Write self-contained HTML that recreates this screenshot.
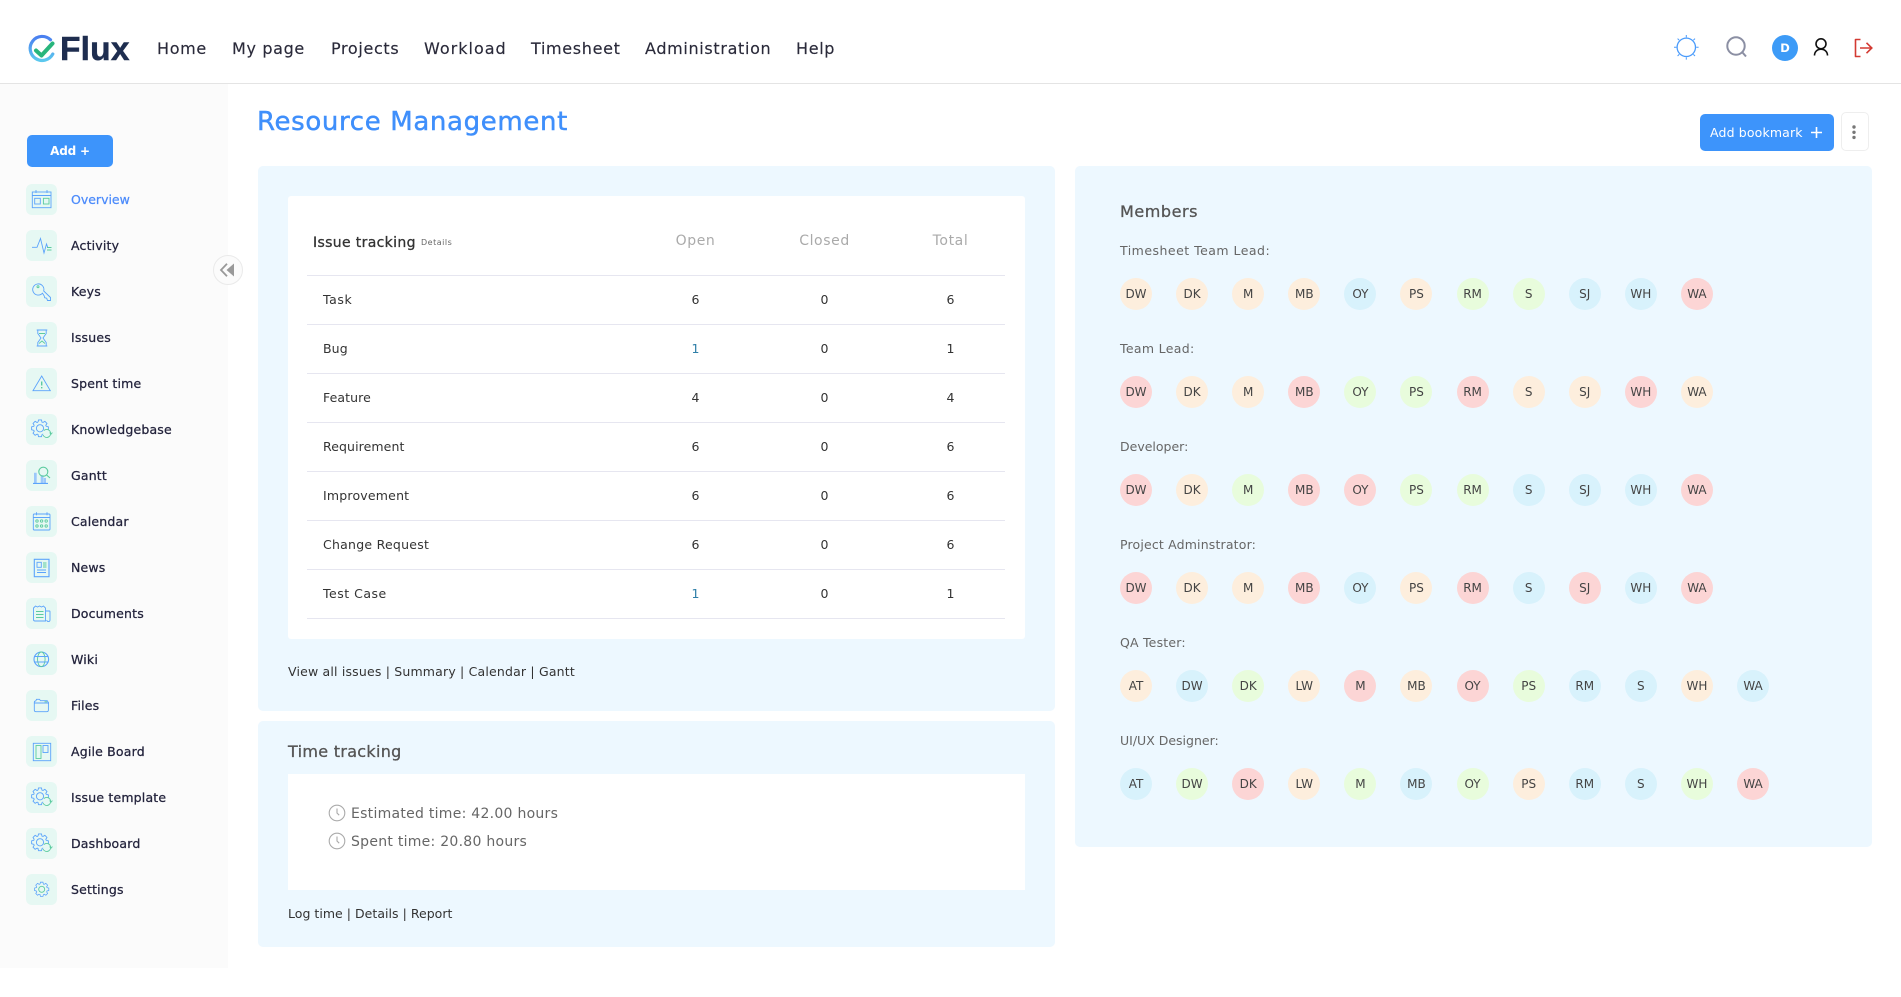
<!DOCTYPE html>
<html lang="en">
<head>
<meta charset="utf-8">
<title>Resource Management - Flux</title>
<style>
*{box-sizing:border-box}
html,body{margin:0;padding:0;background:#fff;width:1901px;height:997px;overflow:hidden}
body{position:relative;font-family:"DejaVu Sans","Liberation Sans",sans-serif;color:#333}
.t{position:absolute;white-space:nowrap;height:20px;line-height:20px}
.m{-webkit-text-stroke:.3px currentColor}
header{position:absolute;left:0;top:0;width:1901px;height:84px;border-bottom:1px solid #e4e4e4;background:#fff}
.nav{font-size:16px;letter-spacing:.66px;color:#2a2a3a;top:39px;-webkit-text-stroke:.15px currentColor}
aside{position:absolute;left:0;top:84px;width:228px;height:884px;background:#fbfbfb}
.side{position:absolute;left:26px;top:184px;margin:0;padding:0;list-style:none}
.side li{display:flex;align-items:center;height:31px;margin-bottom:15px;font-size:12.5px;letter-spacing:.18px;color:#23233c;-webkit-text-stroke:.25px currentColor}
.side svg{width:31px;height:31px;background:#e6f8f3;border-radius:6px;margin-right:14px;flex:none}
.side .a{color:#4c8bfb;letter-spacing:0}
svg .b{fill:none;stroke:#5ba3fb;stroke-width:.9}
svg .g{fill:none;stroke:#5ccb9f;stroke-width:.9}
.panel{position:absolute;background:#edf8ff;border-radius:5px}
.box{position:absolute;background:#fff}
.row{position:absolute;left:307px;width:698px;height:49px;border-bottom:1px solid #e6e6f0;font-size:12.5px;letter-spacing:.1px;line-height:48px;color:#333}
.row b{position:absolute;font-weight:400;width:60px;text-align:center}
.row .c1{left:358.5px}.row .c2{left:487.5px}.row .c3{left:613.5px}
.row span{position:absolute;left:16px}
.th{font-size:14px;letter-spacing:.6px;color:#aaa;width:90px;text-align:center;top:231px}
.links{font-size:12.5px;letter-spacing:.18px;color:#333}
.role{font-size:12.5px;letter-spacing:.48px;color:#666;left:1120px}
.av{position:absolute;left:1120px;display:flex}
.av i{font-style:normal;display:block;width:32px;height:32px;border-radius:50%;margin-right:24.1px;text-align:center;line-height:32px;font-size:12px;color:#444}
.o{background:#fdeedd}.u{background:#d8f2fc}.n{background:#e8fcdc}.r{background:#fcd5d5}
</style>
</head>
<body>

<svg width="0" height="0" style="position:absolute">
  <defs>
    <g id="cog">
      <path id="tooth" d="M6.18-2L8.37-1.48V1.48L6.18 2L5.79 2.95"/>
      <use href="#tooth" transform="rotate(45)"/>
      <use href="#tooth" transform="rotate(90)"/>
      <use href="#tooth" transform="rotate(135)"/>
      <use href="#tooth" transform="rotate(180)"/>
      <use href="#tooth" transform="rotate(225)"/>
      <use href="#tooth" transform="rotate(270)"/>
      <use href="#tooth" transform="rotate(315)"/>
    </g>
    <g id="cogrefresh">
      <use href="#cog" transform="translate(14 14.3)" class="b"/>
      <circle class="b" cx="14" cy="14.3" r="3.6"/>
      <path d="M17 21a4 4 0 1 0 1-4.5" fill="#e6f8f3" stroke="#5ccb9f" stroke-width=".9"/>
      <path class="g" d="M23.6 18.6l1.4 1.6 1.4-1.6"/>
    </g>
    <linearGradient id="lg" x1="0" y1="0" x2="0" y2="1">
      <stop offset="0" stop-color="#4a7ff0"/><stop offset="1" stop-color="#5cc8ee"/>
    </linearGradient>
  </defs>
</svg>

<header>
  <svg style="position:absolute;left:26px;top:33px" width="34" height="32" viewBox="26 33 34 32">
    <path d="M50.5 39.8A12 12 0 1 0 52.8 54" fill="none" stroke="url(#lg)" stroke-width="3.2" stroke-linecap="round"/>
    <path d="M36 50.5L41.5 55.5L52.5 43.5" fill="none" stroke="#28b57c" stroke-width="4" stroke-linecap="round" stroke-linejoin="round"/>
  </svg>
  <div class="t" style="left:60px;top:40px;font:bold 33.5px/20px 'Liberation Sans',sans-serif;color:#1e2d4f;letter-spacing:.2px;-webkit-text-stroke:.5px #1e2d4f">Flux</div>
  <a class="t nav" style="left:157px">Home</a>
  <a class="t nav" style="left:232px">My page</a>
  <a class="t nav" style="left:331px">Projects</a>
  <a class="t nav" style="left:424px;letter-spacing:1px">Workload</a>
  <a class="t nav" style="left:531px">Timesheet</a>
  <a class="t nav" style="left:645px">Administration</a>
  <a class="t nav" style="left:796px">Help</a>

  <svg style="position:absolute;left:1670px;top:25px" width="210" height="45" viewBox="1670 25 210 45">
    <circle cx="1686.3" cy="47.3" r="9.2" fill="none" stroke="#4a9bfb" stroke-width="1.3"/>
    <path d="M1686.3 35v2.4M1686.3 57.2v2.4M1674 47.3h2.4M1696.2 47.3h2.4M1677.6 38.6l1.6 1.6M1693.4 54.4l1.6 1.6M1677.6 56l1.6-1.6M1693.4 40.2l1.6-1.6" stroke="#4a9bfb" stroke-width="1" fill="none"/>
    <circle cx="1736" cy="46" r="8.7" fill="none" stroke="#8b8fa3" stroke-width="2"/>
    <path d="M1742.5 52.5L1746 56.5" stroke="#8b8fa3" stroke-width="2" fill="none"/>
    <circle cx="1785" cy="48" r="13" fill="#3d9bf7"/>
    <circle cx="1821" cy="43.8" r="5" fill="none" stroke="#111" stroke-width="1.6"/>
    <path d="M1814.5 55.5c0-3.8 2.8-6.3 6.5-6.3s6.5 2.5 6.5 6.3" fill="none" stroke="#111" stroke-width="1.6"/>
    <path d="M1860.5 39.5H1855.5V56.5H1860.5" fill="none" stroke="#d33a32" stroke-width="1.6" stroke-linejoin="round"/>
    <path d="M1860 48H1871.5M1866.5 42.8L1871.8 48L1866.5 53.2" fill="none" stroke="#d33a32" stroke-width="1.6"/>
  </svg>
  <div class="t" style="left:1775px;top:38px;width:20px;text-align:center;color:#fff;font-weight:bold;font-size:11.5px">D</div>
</header>

<aside></aside>

<div style="position:absolute;left:27px;top:135px;width:86px;height:32px;background:#3d94fb;border-radius:5px;color:#fff;font-weight:bold;font-size:12px;letter-spacing:-.2px;line-height:32px;text-align:center">Add +</div>

<ul class="side">
  <li class="a"><svg viewBox="0 0 31 31"><rect class="b" x="6.3" y="8" width="18.7" height="15.7"/><path class="b" d="M6.3 11.5H25M10 6v3M21 6v3"/><rect class="b" x="8.7" y="14.3" width="5.6" height="5.7"/><rect class="g" x="17.4" y="14.3" width="5.6" height="5.7"/></svg>Overview</li>
  <li><svg viewBox="0 0 31 31"><path class="b" d="M6 17.3h5l3.5-8.8L18 23l2.5-9 1.2 3.3"/><path class="g" d="M21 17.5h4.5M21 20h4.5"/></svg>Activity</li>
  <li><svg viewBox="0 0 31 31"><path class="b" d="M16.5 17.2a5.6 5.6 0 1 1 1.2-2.2l6.8 6.5v3h-3l-.8-2.3-2-.5-.5-1.8z"/><circle class="g" cx="12" cy="10.7" r="1"/></svg>Keys</li>
  <li><svg viewBox="0 0 31 31"><path class="b" d="M10.7 8h10.6M10.7 24h10.6M11.8 8v3.5L15 16l-3.2 4.5V24M20.2 8v3.5L17 16l3.2 4.5V24"/><path class="g" d="M13 11.5h6M13 21.5l3-2.5 3 2.5"/></svg>Issues</li>
  <li><svg viewBox="0 0 31 31"><path class="b" d="M15.7 8L24.3 22.7H7z"/><path class="g" style="stroke-width:1.4" d="M15.7 13.5v4M15.7 19v1.4"/></svg>Spent time</li>
  <li><svg viewBox="0 0 31 31"><use href="#cogrefresh"/></svg>Knowledgebase</li>
  <li><svg viewBox="0 0 31 31"><path d="M8 12.7h2.7V23H8zM14.7 15.3h2.8V23h-2.8zM17.8 18h2.2v5h-2.2z" fill="#9cc8fb"/><path class="b" style="stroke-width:1.1" d="M7 23.4H22"/><circle class="g" style="stroke-width:1.1" cx="17.3" cy="11.7" r="4.5"/><path class="g" style="stroke-width:1.1" d="M20.6 15l3.4 3"/></svg>Gantt</li>
  <li><svg viewBox="0 0 31 31"><rect class="b" x="7.3" y="8" width="16.7" height="16" rx="1"/><path class="b" d="M7.3 11.5H24M10.5 6.3v3M21 6.3v3"/><g class="g"><circle cx="11" cy="15" r="1.2"/><circle cx="15.6" cy="15" r="1.2"/><circle cx="20.2" cy="15" r="1.2"/><circle cx="11" cy="20" r="1.2"/><circle cx="15.6" cy="20" r="1.2"/><circle cx="20.2" cy="20" r="1.2"/></g></svg>Calendar</li>
  <li><svg viewBox="0 0 31 31"><rect class="b" style="stroke-width:1.1" x="8.3" y="7.3" width="14.7" height="17.4"/><rect class="b" x="11" y="10.3" width="4.3" height="5"/><path class="g" d="M17 11h3.5M17 13h3.5M17 15h3.5"/><path class="b" d="M11 18h9M11 20.5h9"/></svg>News</li>
  <li><svg viewBox="0 0 31 31"><path class="b" d="M7.5 10l2-2 2 1 2-1 2 1 2-1 2 2v13H9a1.5 1.5 0 0 1-1.5-1.5zM20 13h3.5a.5.5 0 0 1 .5.5V22a1.6 1.6 0 0 1-3.2 0"/><path class="g" d="M10 13.5h7.5M10 16.5h7.5M10 19.5h7.5"/></svg>Documents</li>
  <li><svg viewBox="0 0 31 31"><circle class="b" style="stroke-width:1.1" cx="15.3" cy="15.3" r="7.3"/><ellipse class="g" cx="15.3" cy="15.3" rx="3.8" ry="7.3"/><path class="b" d="M8.5 12.5h13.6M8.5 18h13.6"/></svg>Wiki</li>
  <li><svg viewBox="0 0 31 31"><path class="b" d="M8.3 12.5c0-1 .6-1.6 1.5-1.6l.7-1.6h3l1 1.4h6.7l1.2 1.8v7.5c0 1-.7 1.7-1.7 1.7H10c-1 0-1.7-.7-1.7-1.7z"/><path class="b" d="M8.3 13h14.7"/><path class="g" d="M18.5 11.8h2.5"/></svg>Files</li>
  <li><svg viewBox="0 0 31 31"><rect class="b" x="7.3" y="7.3" width="17.4" height="17.4"/><rect class="g" x="10" y="9.5" width="5" height="13"/><rect class="b" x="17" y="9.5" width="5" height="7"/></svg>Agile Board</li>
  <li><svg viewBox="0 0 31 31"><use href="#cogrefresh"/></svg>Issue template</li>
  <li><svg viewBox="0 0 31 31"><use href="#cogrefresh"/></svg>Dashboard</li>
  <li><svg viewBox="0 0 31 31"><use href="#cog" class="b" transform="translate(15.7 15.3) scale(.85)"/><circle class="g" cx="15.7" cy="15.3" r="3"/></svg>Settings</li>
</ul>

<div style="position:absolute;left:213px;top:255px;width:30px;height:30px;border-radius:50%;background:#fbfbfb;border:1px solid #eaeaea"></div>
<svg style="position:absolute;left:213px;top:255px" width="30" height="30" viewBox="213 255 30 30"><path d="M227 263.8L221 270L227 276.2" fill="none" stroke="#999" stroke-width="1.8"/><path d="M234 263.5L226.5 270L234 276.5Z" fill="#999"/></svg>

<h1 class="t" style="margin:0;left:257px;top:112px;font-size:26px;font-weight:400;letter-spacing:.64px;color:#3f8ffb;-webkit-text-stroke:.45px #3f8ffb">Resource Management</h1>

<div style="position:absolute;left:1700px;top:114px;width:134px;height:37px;background:#3d94fb;border-radius:5px"></div>
<div class="t" style="left:1710px;top:123px;font-size:12.5px;letter-spacing:.15px;color:#fff">Add bookmark</div>
<svg style="position:absolute;left:1810px;top:126px" width="13" height="13" viewBox="0 0 13 13"><path d="M6.5 1v11M1 6.5h11" stroke="#fff" stroke-width="1.6" fill="none"/></svg>
<div style="position:absolute;left:1841px;top:112px;width:28px;height:39px;background:#fff;border:1px solid #eee;border-radius:5px"></div>
<svg style="position:absolute;left:1850px;top:122px" width="8" height="20" viewBox="0 0 8 20"><circle cx="4" cy="5" r="1.7" fill="#777"/><circle cx="4" cy="10.3" r="1.7" fill="#777"/><circle cx="4" cy="15.4" r="1.7" fill="#777"/></svg>

<!-- Issue tracking panel -->
<section class="panel" style="left:258px;top:166px;width:797px;height:545px"></section>
<div class="box" style="left:288px;top:196px;width:737px;height:443px;border-radius:3px"></div>
<div class="t m" style="left:313px;top:233px;font-size:14px;letter-spacing:.35px;color:#333">Issue tracking</div>
<div class="t" style="left:421px;top:233px;font-size:8px;letter-spacing:.5px;color:#666">Details</div>
<div class="t th" style="left:650.5px">Open</div>
<div class="t th" style="left:779.5px">Closed</div>
<div class="t th" style="left:905.5px">Total</div>
<div style="position:absolute;left:307px;top:275px;width:698px;height:1px;background:#e6e6f0"></div>
<div class="row" style="top:276px"><span style="letter-spacing:.6px">Task</span><b class="c1">6</b><b class="c2">0</b><b class="c3">6</b></div>
<div class="row" style="top:325px"><span>Bug</span><b class="c1" style="color:#2f7fa8">1</b><b class="c2">0</b><b class="c3">1</b></div>
<div class="row" style="top:374px"><span>Feature</span><b class="c1">4</b><b class="c2">0</b><b class="c3">4</b></div>
<div class="row" style="top:423px"><span>Requirement</span><b class="c1">6</b><b class="c2">0</b><b class="c3">6</b></div>
<div class="row" style="top:472px"><span style="letter-spacing:.2px">Improvement</span><b class="c1">6</b><b class="c2">0</b><b class="c3">6</b></div>
<div class="row" style="top:521px"><span style="letter-spacing:.25px">Change Request</span><b class="c1">6</b><b class="c2">0</b><b class="c3">6</b></div>
<div class="row" style="top:570px"><span style="letter-spacing:.5px">Test Case</span><b class="c1" style="color:#2f7fa8">1</b><b class="c2">0</b><b class="c3">1</b></div>
<div class="t links" style="left:288px;top:662px">View all issues | Summary | Calendar | Gantt</div>

<!-- Time tracking panel -->
<section class="panel" style="left:258px;top:721px;width:797px;height:226px"></section>
<div class="t m" style="left:288px;top:742px;font-size:16px;letter-spacing:.3px;color:#555">Time tracking</div>
<div class="box" style="left:288px;top:774px;width:737px;height:116px"></div>
<svg style="position:absolute;left:328px;top:804px" width="18" height="46" viewBox="0 0 18 46"><g fill="none" stroke="#aaa" stroke-width="1.1"><circle cx="9" cy="9" r="7.8"/><path d="M9 4.5V9l2.2 2.2"/><circle cx="9" cy="37" r="7.8"/><path d="M9 32.5V37l2.2 2.2"/></g></svg>
<div class="t" style="left:351px;top:804px;font-size:14px;letter-spacing:.27px;color:#666">Estimated time: 42.00 hours</div>
<div class="t" style="left:351px;top:832px;font-size:14px;letter-spacing:.27px;color:#666">Spent time: 20.80 hours</div>
<div class="t links" style="left:288px;top:904px;letter-spacing:.03px">Log time | Details | Report</div>

<!-- Members panel -->
<section class="panel" style="left:1075px;top:166px;width:797px;height:681px"></section>
<div class="t m" style="left:1120px;top:202px;font-size:16px;letter-spacing:.55px;color:#555">Members</div>

<div class="t role" style="top:241px">Timesheet Team Lead:</div>
<div class="av" style="top:278px"><i class="o">DW</i><i class="o">DK</i><i class="o">M</i><i class="o">MB</i><i class="u">OY</i><i class="o">PS</i><i class="n">RM</i><i class="n">S</i><i class="u">SJ</i><i class="u">WH</i><i class="r">WA</i></div>

<div class="t role" style="top:339px;letter-spacing:.33px">Team Lead:</div>
<div class="av" style="top:376px"><i class="r">DW</i><i class="o">DK</i><i class="o">M</i><i class="r">MB</i><i class="n">OY</i><i class="n">PS</i><i class="r">RM</i><i class="o">S</i><i class="o">SJ</i><i class="r">WH</i><i class="o">WA</i></div>

<div class="t role" style="top:437px;letter-spacing:0">Developer:</div>
<div class="av" style="top:474px"><i class="r">DW</i><i class="o">DK</i><i class="n">M</i><i class="r">MB</i><i class="r">OY</i><i class="n">PS</i><i class="n">RM</i><i class="u">S</i><i class="u">SJ</i><i class="u">WH</i><i class="r">WA</i></div>

<div class="t role" style="top:535px;letter-spacing:.17px">Project Adminstrator:</div>
<div class="av" style="top:572px"><i class="r">DW</i><i class="o">DK</i><i class="o">M</i><i class="r">MB</i><i class="u">OY</i><i class="o">PS</i><i class="r">RM</i><i class="u">S</i><i class="r">SJ</i><i class="u">WH</i><i class="r">WA</i></div>

<div class="t role" style="top:633px;letter-spacing:.2px">QA Tester:</div>
<div class="av" style="top:670px"><i class="o">AT</i><i class="u">DW</i><i class="n">DK</i><i class="o">LW</i><i class="r">M</i><i class="o">MB</i><i class="r">OY</i><i class="n">PS</i><i class="u">RM</i><i class="u">S</i><i class="o">WH</i><i class="u">WA</i></div>

<div class="t role" style="top:731px;letter-spacing:0">UI/UX Designer:</div>
<div class="av" style="top:768px"><i class="u">AT</i><i class="n">DW</i><i class="r">DK</i><i class="o">LW</i><i class="n">M</i><i class="u">MB</i><i class="n">OY</i><i class="o">PS</i><i class="u">RM</i><i class="u">S</i><i class="n">WH</i><i class="r">WA</i></div>

</body>
</html>
